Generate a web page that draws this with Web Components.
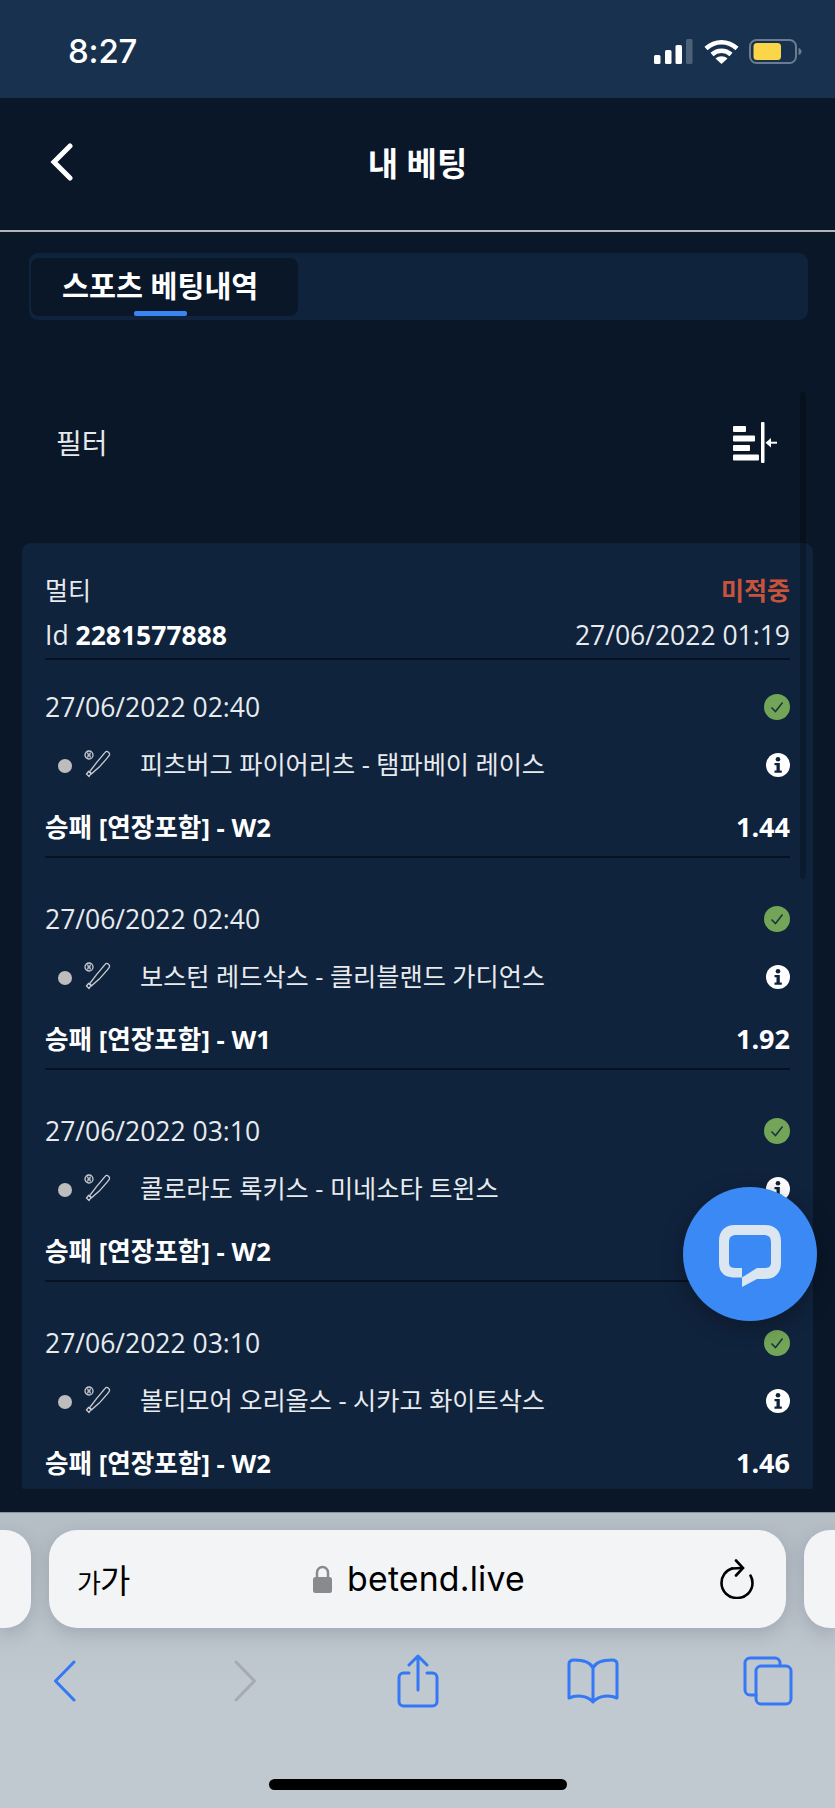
<!DOCTYPE html>
<html lang="ko">
<head>
<meta charset="utf-8">
<title>내 베팅</title>
<style>
  html, body { margin: 0; height: 100%; }
  body { width: 835px; height: 1808px; overflow: hidden; background: #0a1729; color: #fff;
    font-family: "Open Sans", "Noto Sans CJK KR", sans-serif; position: relative; }
  .screen { display: flex; flex-direction: column; height: 1808px; }
</style>
</head>
<body>
<div class="screen">
  <status-bar time="8:27"></status-bar>
  <nav-header>내 베팅</nav-header>
  <bet-tabs>스포츠 베팅내역</bet-tabs>
  <scroll-pane>
    <filter-bar>필터</filter-bar>
    <bet-card kind="멀티" status="미적중" bet-id="2281577888" placed="27/06/2022 01:19">
      <bet-row date="27/06/2022 02:40" event="피츠버그 파이어리츠 - 탬파베이 레이스" market="승패 [연장포함] - W2" odds="1.44"></bet-row>
      <bet-row date="27/06/2022 02:40" event="보스턴 레드삭스 - 클리블랜드 가디언스" market="승패 [연장포함] - W1" odds="1.92"></bet-row>
      <bet-row date="27/06/2022 03:10" event="콜로라도 록키스 - 미네소타 트윈스" market="승패 [연장포함] - W2" odds="1.50"></bet-row>
      <bet-row date="27/06/2022 03:10" event="볼티모어 오리올스 - 시카고 화이트삭스" market="승패 [연장포함] - W2" odds="1.46"></bet-row>
    </bet-card>
  </scroll-pane>
  <safari-bar url="betend.live"></safari-bar>
</div>
<chat-fab></chat-fab>

<script>
customElements.define('status-bar', class extends HTMLElement {
  connectedCallback() {
    this.attachShadow({ mode: 'open' }).innerHTML = `
      <style>
        :host { display: flex; flex: none; height: 98px; box-sizing: border-box; padding: 0 33px 0 68px;
          align-items: center; justify-content: space-between; background: #17314f; }
        .time { font: 500 33px/1 Inter, sans-serif; color: #fff; margin-top: 4px; letter-spacing: -.2px; }
        svg { display: block; margin-top: 5px; }
      </style>
      <span class="time">${this.getAttribute('time')}</span>
      <svg width="148" height="26" viewBox="0 0 148 26">
        <g fill="#fff">
          <rect x="0" y="16" width="6.500" height="9" rx="1.500"/>
          <rect x="11" y="11" width="6.500" height="14" rx="1.500"/>
          <rect x="21.500" y="6" width="6.500" height="19" rx="1.500"/>
        </g>
        <rect x="32" y="0" width="6.500" height="25" rx="1.500" fill="#4d6179"/>
        <g fill="none" stroke="#fff" stroke-width="4.500">
          <path d="M52 9.500c9-8.500 22-8.500 31 0"/>
          <path d="M58 15.500c5.500-5 13.500-5 19 0"/>
        </g>
        <path d="M67.500 25l-6-5.500c3.500-3 8.500-3 12 0z" fill="#fff"/>
        <rect x="96" y="1" width="46" height="23" rx="6.500" fill="none" stroke="#6b7c90" stroke-width="2"/>
        <rect x="99.500" y="4" width="27.500" height="17" rx="3.500" fill="#fad648"/>
        <path d="M144.500 9c2 .6 3 2 3 3.500s-1 3-3 3.500z" fill="#6b7c90"/>
      </svg>`
  }
});

customElements.define('nav-header', class extends HTMLElement {
  connectedCallback() {
    this.attachShadow({ mode: 'open' }).innerHTML = `
      <style>
        :host { display: grid; grid-template-columns: 1fr auto 1fr; align-items: center; flex: none;
          height: 134px; box-sizing: border-box; border-bottom: 2px solid #b0b4b9; padding: 0 50px;
          background: #0a1729; }
        .title { font: 700 33px/1 "Open Sans", "Noto Sans CJK KR", sans-serif; color: #fff; margin-top: -2px; }
        svg { display: block; margin-top: -4px; }
      </style>
      <svg width="24" height="38" viewBox="0 0 24 38"><path d="M20 3L4 19l16 16" fill="none" stroke="#fff" stroke-width="5" stroke-linecap="round" stroke-linejoin="miter"/></svg>
      <div class="title"><slot></slot></div>
      <span></span>`
  }
});

customElements.define('bet-tabs', class extends HTMLElement {
  connectedCallback() {
    this.attachShadow({ mode: 'open' }).innerHTML = `
      <style>
        :host { display: flex; flex: none; margin: 21px 27px 0 29px; height: 67px; box-sizing: border-box;
          padding: 5px 2px 4px; background: #10233d; border-radius: 9px; }
        .tab { width: 267px; box-sizing: border-box; background: #0a1729; border-radius: 8px; position: relative;
          padding-left: 31px; font: 700 29.300px/56px "Open Sans", "Noto Sans CJK KR", sans-serif; color: #fff; }
        .tab::after { content: ""; position: absolute; left: 103px; bottom: 0; width: 53px; height: 5px;
          background: #3a85f2; border-radius: 2px; }
      </style>
      <div class="tab"><slot></slot></div>`
  }
});

customElements.define('filter-bar', class extends HTMLElement {
  connectedCallback() {
    this.attachShadow({ mode: 'open' }).innerHTML = `
      <style>
        :host { display: flex; flex: none; height: 223px; box-sizing: border-box; padding: 0 58px 0 56px;
          align-items: center; justify-content: space-between; font-size: 28px; color: #e6e8eb; }
        span { margin-top: 21px; }
        svg { display: block; margin-top: 21px; }
      </style>
      <span><slot></slot></span>
      <svg width="45" height="41" viewBox="0 0 45 41">
        <g fill="#fff">
          <rect x="1" y="4" width="13" height="6" rx="1"/>
          <rect x="1" y="13.500" width="22" height="6" rx="1"/>
          <rect x="1" y="23" width="17" height="6" rx="1"/>
          <rect x="1" y="32.500" width="26" height="6" rx="1"/>
          <rect x="29" y="0" width="3.500" height="41" rx="1"/>
          <rect x="37" y="19.700" width="8" height="2"/>
          <path d="M33.500 20.700l5.500-4.700v9.400z"/>
        </g>
      </svg>`
  }
});

customElements.define('scroll-pane', class extends HTMLElement {
  connectedCallback() {
    this.attachShadow({ mode: 'open' }).innerHTML = `
      <style>
        :host { display: block; flex: none; height: 1169px; overflow: hidden; position: relative; margin-bottom: 23px; }
        .thumb { position: absolute; left: 800px; top: 72px; width: 6px; height: 487px; background: rgba(0,0,0,.25); border-radius: 3px; }
      </style>
      <slot></slot>
      <div class="thumb"></div>`
  }
});

customElements.define('bet-card', class extends HTMLElement {
  connectedCallback() {
    this.attachShadow({ mode: 'open' }).innerHTML = `
      <style>
        :host { display: block; margin: 0 22px; box-sizing: border-box; padding: 23px 23px 0; background: #10233d;
          border-radius: 9px; color: #fff; font-size: 26.500px; }
        .line { display: flex; align-items: center; justify-content: space-between; }
        .top { height: 46px; color: #e8ebee; font-size: 25px; }
        .status { color: #c8533b; font-weight: 700; }
        .meta { height: 48px; box-sizing: border-box; border-bottom: 2px solid #07111f; color: #e8ebee; }
        b { color: #fff; font-weight: 700; }
      </style>
      <div class="line top"><span>${this.getAttribute('kind')}</span><span class="status">${this.getAttribute('status')}</span></div>
      <div class="line meta"><span>Id <b>${this.getAttribute('bet-id')}</b></span><span>${this.getAttribute('placed')}</span></div>
      <slot></slot>`
  }
});

customElements.define('bet-row', class extends HTMLElement {
  connectedCallback() {
    this.attachShadow({ mode: 'open' }).innerHTML = `
      <style>
        :host { display: block; box-sizing: border-box; height: 198px; margin-bottom: 14px; padding-top: 25px;
          border-bottom: 2px solid #07111f; }
        .line { display: flex; align-items: center; justify-content: space-between; }
        .date { height: 44px; color: #e8ebee; }
        .event { height: 72px; color: #e8ebee; }
        .event .left { display: flex; align-items: center; }
        .dot { width: 14px; height: 14px; border-radius: 50%; background: #bdbdbd; margin: 2px 0 0 13px; }
        .bat { display: block; margin: -3px 0 0 12px; }
        .name { margin-left: 28px; margin-top: -4px; font-size: 25.200px; }
        .market { height: 50px; font-weight: 700; color: #fff; font-size: 25.600px; }
        .odds { font-size: 27px; }
        svg { display: block; }
      </style>
      <div class="line date"><span>${this.getAttribute('date')}</span>
        <svg width="26" height="26" viewBox="0 0 26 26"><circle cx="13" cy="13" r="13" fill="#72a557"/><path d="M7.500 13.500l4 4 7-9" fill="none" stroke="#1b3340" stroke-width="1.500"/></svg>
      </div>
      <div class="line event">
        <div class="left">
          <i class="dot"></i>
          <svg class="bat" width="28" height="28" viewBox="0 0 28 28">
            <g fill="none" stroke="#c9ccd0" stroke-width="1.300">
              <circle cx="5" cy="5" r="4"/><path d="M3.500 2.500c1 1.500 1 3.500 0 5M6.500 2.500c-1 1.500-1 3.500 0 5"/>
              <path d="M22 1.500c1.500-.6 4 1.500 3.500 3.300-.2 1-6 7.500-10 12l-8 7-2-2 6.500-8.500c4-4.500 9-11 10-11.800z"/>
              <path d="M2.500 24l2-2.500 2.500 2-2 3z"/>
            </g>
          </svg>
          <span class="name">${this.getAttribute('event')}</span>
        </div>
        <svg width="24" height="24" viewBox="0 0 24 24"><circle cx="12" cy="12" r="12" fill="#fff"/><circle cx="12" cy="6.300" r="2.300" fill="#10233d"/><path d="M8.500 10h5.300v7.500h2v2.300H8.500v-2.300h2V12.300h-2z" fill="#10233d"/></svg>
      </div>
      <div class="line market"><span>${this.getAttribute('market')}</span><span class="odds">${this.getAttribute('odds')}</span></div>`
  }
});

customElements.define('safari-bar', class extends HTMLElement {
  connectedCallback() {
    this.attachShadow({ mode: 'open' }).innerHTML = `
      <style>
        :host { display: block; flex: 1; box-sizing: border-box; padding-top: 17px; position: relative; overflow: hidden;
          border-top: 1px solid #8b949e; background: linear-gradient(#b6bec6, #b3bbc3 40px, #c0c8d0 170px); }
        .tabs { display: grid; grid-template-columns: 31px 737px 31px; column-gap: 18px; height: 98px; }
        .stub { background: #f3f4f6; box-shadow: 0 6px 16px rgba(90,100,110,.25); }
        .stub.l { border-radius: 0 26px 26px 0; }
        .stub.r { border-radius: 26px 0 0 26px; }
        .url { background: #f3f4f6; border-radius: 28px; display: grid; grid-template-columns: 1fr auto 1fr;
          align-items: center; padding: 0 32px 0 28px; color: #000; box-shadow: 0 6px 16px rgba(90,100,110,.25); }
        .aa { font: 400 33px/1 "Noto Sans CJK KR", sans-serif; letter-spacing: -1px; }
        .aa small { font-size: 26px; }
        .addr { display: flex; align-items: center; gap: 15px; margin-left: 7px; font: 400 33.800px/1 Inter, sans-serif; letter-spacing: .2px; }
        .reload { justify-self: end; display: block; }
        .tools { display: flex; align-items: center; padding: 25px 0 0 53px; height: 56px; }
        .tools svg { display: block; flex: none; fill: none; stroke: #3478f6; stroke-width: 3; stroke-linecap: round; stroke-linejoin: round; }
        .home { position: absolute; left: 269px; top: 266px; width: 298px; height: 11px; border-radius: 6px; background: #000; }
      </style>
      <div class="tabs">
        <div class="stub l"></div>
        <div class="url">
          <span class="aa"><small>가</small>가</span>
          <span class="addr">
            <svg width="19" height="28" viewBox="0 0 19 28"><path d="M4 13V7.500a5.500 5.500 0 0 1 11 0V13" fill="none" stroke="#8a8a8e" stroke-width="2.500"/><rect x="0" y="12" width="19" height="16" rx="2.500" fill="#8a8a8e"/></svg>
            ${this.getAttribute('url')}
          </span>
          <svg class="reload" width="34" height="40" viewBox="0 0 34 40" fill="none" stroke="#000" stroke-width="2.600" stroke-linecap="round"><path d="M12 9.500C5.500 11.500 1.500 17.500 1.500 24 1.500 32.500 8.500 39 17 39s15.500-6.500 15.500-15c0-3-.8-5.500-2-7.500"/><path d="M16 1.500l7 7.500-7 7.500"/><path d="M12 9.500l10-.5"/></svg>
        </div>
        <div class="stub r"></div>
      </div>
      <div class="tools">
        <svg width="24" height="42" viewBox="0 0 24 42"><path d="M21 2L2.500 21 21 40"/></svg>
        <svg width="24" height="42" viewBox="0 0 24 42" style="stroke:#a4abb2;margin-left:156px"><path d="M3 2l18.500 19L3 40"/></svg>
        <svg width="42" height="54" viewBox="0 0 42 54" style="margin-left:140px"><path d="M12 19H6.500A4.500 4.500 0 0 0 2 23.500v24A4.500 4.500 0 0 0 6.500 52h29a4.500 4.500 0 0 0 4.500-4.500v-24a4.500 4.500 0 0 0-4.500-4.500H30"/><path d="M21 36V3M12 11l9-9 9 9"/></svg>
        <svg width="52" height="46" viewBox="0 0 52 46" style="margin-left:128px"><path d="M26 10C23 3 15 2 7 2 4 2 2 3 2 6v34c7-3 18-3 24 4 6-7 17-7 24-4V6c0-3-2-4-5-4-8 0-16 1-19 8zM26 10v33"/></svg>
        <svg width="50" height="50" viewBox="0 0 50 50" style="margin-left:124px"><path d="M37 9V7a5 5 0 0 0-5-5H7a5 5 0 0 0-5 5v27a5 5 0 0 0 5 5h6"/><rect x="13" y="10" width="35" height="38" rx="5"/></svg>
      </div>
      <div class="home"></div>`
  }
});

customElements.define('chat-fab', class extends HTMLElement {
  connectedCallback() {
    this.attachShadow({ mode: 'open' }).innerHTML = `
      <style>
        :host { position: absolute; left: 683px; top: 1187px; width: 134px; height: 134px; border-radius: 50%;
          background: #3a89f5; display: flex; align-items: center; justify-content: center;
          box-shadow: 0 6px 22px rgba(0,0,0,.3); }
        svg { display: block; margin-top: 4px; }
      </style>
      <svg width="62" height="62" viewBox="0 0 62 62">
        <path fill-rule="evenodd" fill="#dce6f0" d="M16 0h30c10 0 16 6 16 16v22c0 10-6 16-16 16H38L23 62V52.500H16C6 52.500 0 48 0 38V16C0 6 6 0 16 0zm2 10c-6 0-8 2-8 8v19c0 5 2 6 8 6h5v9.500L38 43h6c6 0 8-1 8-6V18c0-6-2-8-8-8z"/>
      </svg>`
  }
});
</script>
</body>
</html>
